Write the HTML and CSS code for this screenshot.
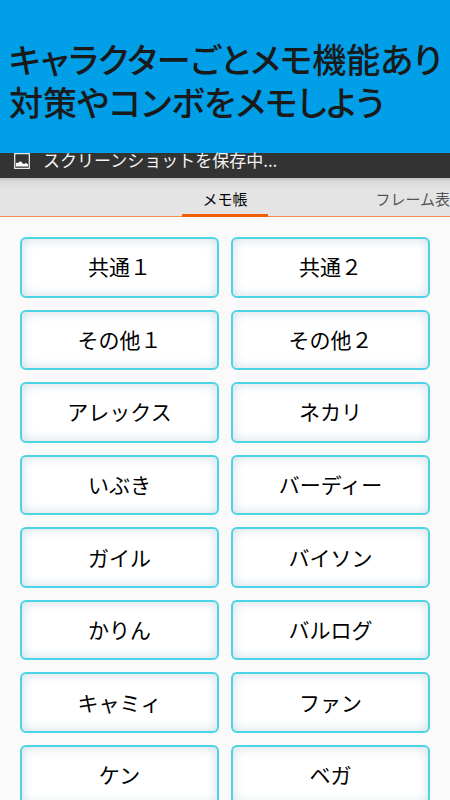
FILE: index.html
```html
<!DOCTYPE html>
<html lang="ja">
<head>
<meta charset="utf-8">
<meta name="viewport" content="width=device-width, initial-scale=1">
<title>メモ帳</title>
<link rel="stylesheet" href="styles.css">
</head>
<body>
<div class="app">
  <header class="banner">
    <h1>キャラクターごとメモ機能あり<br>対策やコンボをメモしよう</h1>
  </header>
  <div class="status">
    <svg class="status-icon" viewBox="0 0 16 16" aria-hidden="true">
      <path fill="none" stroke="#e8e8e8" stroke-width="1.3" d="M.7.7h14.6v14.6H.7z"/>
      <path fill="#fff" d="M2 13.5V10.2l1-.8 1.2.6 1.6-1.6h1.3l1.6 2 1.5.5 1.6-.8 1.2.3 1 1.2v1.9z"/>
    </svg>
    <span>スクリーンショットを保存中...</span>
  </div>
  <nav class="tabs">
    <a class="tab tab-active" href="#memo">メモ帳</a>
    <a class="tab tab-next" href="#frames">フレーム表</a>
  </nav>
  <main class="grid" id="memo">
    <button type="button">共通１</button>
    <button type="button">共通２</button>
    <button type="button">その他１</button>
    <button type="button">その他２</button>
    <button type="button">アレックス</button>
    <button type="button">ネカリ</button>
    <button type="button">いぶき</button>
    <button type="button">バーディー</button>
    <button type="button">ガイル</button>
    <button type="button">バイソン</button>
    <button type="button">かりん</button>
    <button type="button">バルログ</button>
    <button type="button">キャミィ</button>
    <button type="button">ファン</button>
    <button type="button">ケン</button>
    <button type="button">ベガ</button>
  </main>
</div>
</body>
</html>
```
FILE: styles.css
```css
* {
  box-sizing: border-box;
}

body {
  margin: 0;
  background: #fafafa;
  color: #000;
  font-family: "Noto Sans CJK JP", sans-serif;
}

.app {
  height: 100vh;
  overflow: hidden;
}

.banner {
  padding: 37px 9px 30px;
  background: #009fe8;
}

.banner h1 {
  margin: 0;
  color: #1a1a1a;
  font-size: 34px;
  font-weight: 500;
  line-height: 43px;
  white-space: nowrap;
  font-feature-settings: "palt";
}

.status {
  display: flex;
  align-items: flex-start;
  gap: 13px;
  height: 25px;
  padding-left: 14px;
  background: #333;
  color: #f2f2f2;
  font-size: 17px;
  line-height: 14px;
  white-space: nowrap;
}

.status-icon {
  flex: none;
  width: 16px;
  height: 16px;
}

.tabs {
  display: grid;
  grid-template-columns: 1fr auto 1fr;
  height: 39px;
  border-bottom: 1px solid #f28a58;
  background: linear-gradient(#c4c4c4, #dcdcdc 4px, #e4e4e4 12px);
  font-size: 15px;
  line-height: 29px;
  white-space: nowrap;
}

.tab {
  padding-top: 6px;
  color: #555;
  text-decoration: none;
}

.tab-active {
  grid-column: 2;
  margin-bottom: -1px;
  padding-right: 20px;
  padding-left: 20px;
  border-bottom: 3px solid #f06000;
  color: #000;
}

.tab-next {
  justify-self: end;
}

.grid {
  display: grid;
  grid-template-columns: 1fr 1fr;
  gap: 12px;
  padding: 20px;
}

.grid button {
  aspect-ratio: 23 / 7;
  padding: 0 0 2px;
  border: 2px solid #4ad4e6;
  border-radius: 6px;
  background: #fff;
  box-shadow: inset 0 0 12px #cfdde4;
  color: #000;
  font: inherit;
  font-size: 21px;
}
```
